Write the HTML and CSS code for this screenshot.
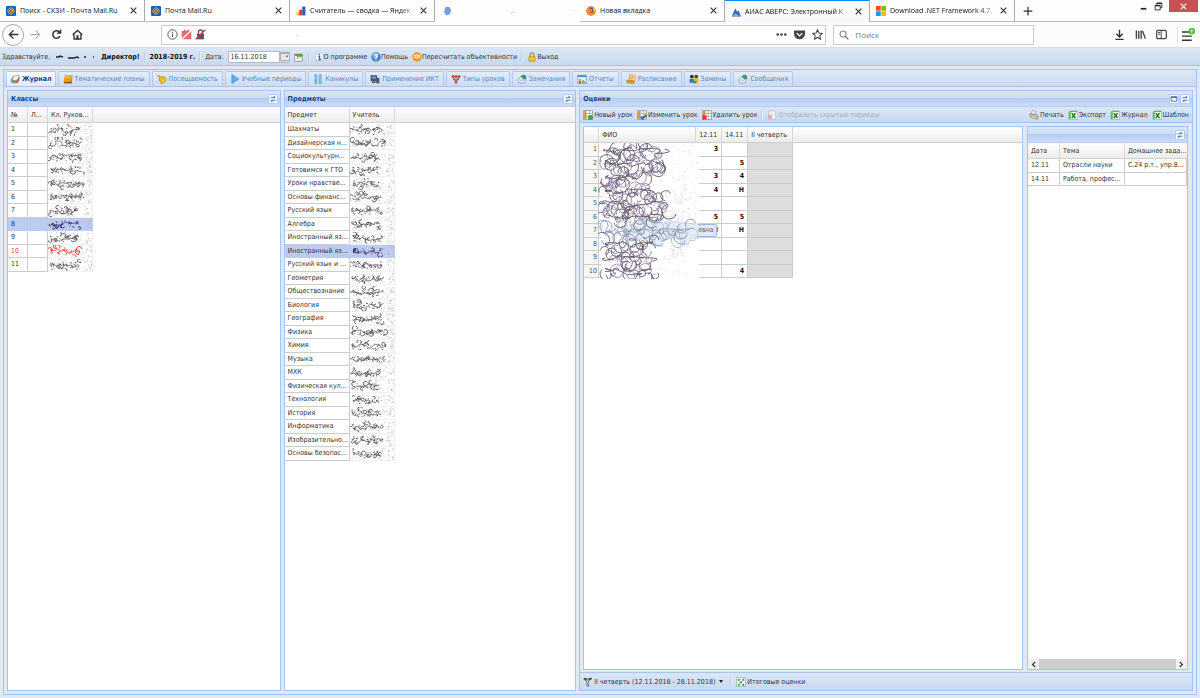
FILE: index.html
```html
<!DOCTYPE html>
<html lang="ru">
<head>
<meta charset="utf-8">
<title>АИАС АВЕРС: Электронный Классный Журнал</title>
<link rel="stylesheet" href="styles.css">
</head>
<body>
<svg class="sprite" aria-hidden="true">
  <symbol id="mail" viewBox="0 0 16 16"><rect width="16" height="16" rx="2" fill="#1560bd"/><circle cx="8" cy="8" r="2.4" fill="none" stroke="#f6b02c" stroke-width="1.6"/><path d="M10.4 5.6v3.2c0 2 2.6 1.600 2.600-.8a5 5 0 1 0-2 4" fill="none" stroke="#f6b02c" stroke-width="1.500"/></symbol>
  <symbol id="stats" viewBox="0 0 16 16"><rect x="1" y="10" width="4" height="5" fill="#f5c518"/><rect x="5" y="6" width="5" height="9" fill="#e23b2e"/><rect x="10" y="1" width="5" height="14" fill="#2f55c8"/></symbol>
  <symbol id="blob" viewBox="0 0 16 16"><path d="M5 1l6 1 2 5-2 6-6 2-3-5 1-6z" fill="#7c9be0"/></symbol>
  <symbol id="fox" viewBox="0 0 16 16"><circle cx="8" cy="8" r="7.500" fill="#f4682c"/><circle cx="8.500" cy="7" r="4" fill="#3c4fb5"/><path d="M1 6c1-3 3-4 3-4l2 3c3-1 5 1 4 3s-3 2-4 1c1 3 6 2 7-2l0-5c5 6 2 13-5 13S0 11 1 6z" fill="#fb8b1e"/><path d="M11 1c4 2 5 6 4 9l-3-2z" fill="#ffd02e"/></symbol>
  <symbol id="peak" viewBox="0 0 16 16"><path d="M1 15L7 2l3 6 2-3 4 10z" fill="#3b66b4"/><path d="M1 15l6-5 3 2 6 3z" fill="#7fa6dd"/></symbol>
  <symbol id="ms" viewBox="0 0 16 16"><path fill="#f25022" d="M0 0h7.500v7.500H0z"/><path fill="#7fba00" d="M8.500 0H16v7.500H8.500z"/><path fill="#00a4ef" d="M0 8.500h7.500V16H0z"/><path fill="#ffb900" d="M8.500 8.500H16V16H8.500z"/></symbol>
  <symbol id="x" viewBox="0 0 16 16"><path d="M3 3l10 10M13 3L3 13" stroke="currentColor" stroke-width="2" fill="none"/></symbol>
  <symbol id="plus" viewBox="0 0 16 16"><path d="M8 1v14M1 8h14" stroke="#333" stroke-width="2"/></symbol>
  <symbol id="back" viewBox="0 0 16 16"><path d="M15 8H2M8 2L2 8l6 6" fill="none" stroke="currentColor" stroke-width="2"/></symbol>
  <symbol id="fwd" viewBox="0 0 16 16"><path d="M1 8h13M8 2l6 6-6 6" fill="none" stroke="currentColor" stroke-width="1.500"/></symbol>
  <symbol id="reload" viewBox="0 0 16 16"><path d="M13 10.500A5.500 5.500 0 1 1 12 4" fill="none" stroke="#333" stroke-width="2.200"/><path d="M15 0v7H8z" fill="#333"/></symbol>
  <symbol id="home" viewBox="0 0 16 16"><path d="M1 8.500L8 2l7 6.500M3 8v6.500h10V8" fill="none" stroke="#333" stroke-width="2"/><path d="M6.500 9h3v6h-3z" fill="#333"/></symbol>
  <symbol id="info" viewBox="0 0 16 16"><circle cx="8" cy="8" r="6.800" fill="none" stroke="#555" stroke-width="1.400"/><path d="M8 4v1.800M8 7v5" stroke="#555" stroke-width="1.700"/></symbol>
  <symbol id="noflash" viewBox="0 0 16 16"><path d="M1 3h3V1h3v2h2V1h3v2h3v12H1z" fill="#e66a6a"/><path d="M1 15L15 2" stroke="#fff" stroke-width="1.800"/></symbol>
  <symbol id="nolock" viewBox="0 0 16 16"><path d="M3 7h10v8H3z" fill="#555"/><path d="M5 8V4.500a3 3 0 0 1 6 0V8" fill="none" stroke="#555" stroke-width="2"/><path d="M1 15L15 1" stroke="#e0304c" stroke-width="2"/></symbol>
  <symbol id="dots" viewBox="0 0 16 16"><circle cx="2.500" cy="8" r="1.900" fill="#444"/><circle cx="8" cy="8" r="1.900" fill="#444"/><circle cx="13.500" cy="8" r="1.900" fill="#444"/></symbol>
  <symbol id="pocket" viewBox="0 0 16 16"><path d="M0 2h16v5a8 8 0 0 1-16 0z" fill="#444"/><path d="M4 6l4 4 4-4" fill="none" stroke="#fff" stroke-width="2"/></symbol>
  <symbol id="star" viewBox="0 0 16 16"><path d="M8 1.200l2.100 4.600 4.900.6-3.600 3.400 1 5L8 12.300l-4.400 2.500 1-5L1 6.400l4.900-.6z" fill="none" stroke="#444" stroke-width="1.500"/></symbol>
  <symbol id="search" viewBox="0 0 16 16"><circle cx="6.500" cy="6.500" r="5" fill="none" stroke="#666" stroke-width="1.400"/><path d="M10 10l5 5" stroke="#666" stroke-width="1.700"/></symbol>
  <symbol id="down" viewBox="0 0 16 16"><path d="M8 1v10M3.500 7L8 11.500 12.500 7M2 15h12" fill="none" stroke="#333" stroke-width="2"/></symbol>
  <symbol id="library" viewBox="0 0 16 16"><path d="M2 2v12M5.500 3v11M9 2v12M11 3l4 11" fill="none" stroke="#444" stroke-width="2"/></symbol>
  <symbol id="sidebar" viewBox="0 0 16 16"><rect x="1" y="2" width="14" height="12" rx="2" fill="none" stroke="#444" stroke-width="1.800"/><path d="M7.500 2v12M3 5h3M3 7.500h3" stroke="#444" stroke-width="1.400"/></symbol>
  <symbol id="menu" viewBox="0 0 16 16"><path d="M0 5h9M0 10h12M0 15h12" stroke="#333" stroke-width="1.800"/><circle cx="12" cy="4" r="4" fill="#4cb82e"/><path d="M12 6.500v-4M10.200 4L12 2.200 13.800 4" fill="none" stroke="#fff"/></symbol>
  <symbol id="min" viewBox="0 0 16 16"><path d="M3 12h10" stroke="#222" stroke-width="3"/></symbol>
  <symbol id="restore" viewBox="0 0 16 16"><path d="M2 6h9v8H2zM5 5V2h9v8h-3" fill="none" stroke="#222" stroke-width="1.500"/><path d="M2 6.500h9M5 2.500h9" stroke="#222" stroke-width="2.500"/></symbol>
  <symbol id="calendar" viewBox="0 0 16 16"><path d="M1 2h14v13H1z" fill="#f4f4f4" stroke="#7d8ba0"/><path d="M1 2h14v3H1z" fill="#a3adbd"/><path d="M4 8h3M4 11h5" stroke="#b6bfce"/><path d="M9 7h4v3H9z" fill="#d0644b"/></symbol>
  <symbol id="calgo" viewBox="0 0 16 16"><path d="M1 4h12v11H1z" fill="#f4f4f4" stroke="#877770"/><path d="M1 3h12v3H1z" fill="#bf574c"/><path d="M6 12c0-4 1-5 4-5V9l5-4-5-4v2C5 3 4 8 6 12z" fill="#4bb333"/></symbol>
  <symbol id="about" viewBox="0 0 16 16"><path d="M8 1a6.500 6.500 0 1 1-2 12.500L4 16v-4A6.500 6.500 0 0 1 8 1z" fill="#f4f9ff" stroke="#9bbbe0"/><path d="M8.500 3v2M7 7h2v5M7 12h4" fill="none" stroke="#2361bd" stroke-width="2"/></symbol>
  <symbol id="help" viewBox="0 0 16 16"><circle cx="8" cy="8" r="7.500" fill="#397fc4"/><circle cx="7" cy="6" r="5" fill="#75b0e5"/><path d="M5.500 6C6 2.500 11 3.500 10 6.500L8 8.500v1.800M8 11.500v2" fill="none" stroke="#fff" stroke-width="2"/></symbol>
  <symbol id="recalc" viewBox="0 0 16 16"><circle cx="8" cy="8" r="7.500" fill="#f59428"/><path d="M3.500 5h9M8 4v8M3 9l2-4 2 4zM9 9l2-4 2 4z" fill="none" stroke="#fff0cf" stroke-width="1.300"/></symbol>
  <symbol id="lock" viewBox="0 0 16 16"><path d="M5 8V4.500a3 3 0 0 1 6 0V8" fill="none" stroke="#9d8d63" stroke-width="2"/><rect x="3" y="7" width="10" height="8.500" rx="1" fill="#f3c31d" stroke="#b98814"/></symbol>
  <symbol id="journal" viewBox="0 0 16 16"><path d="M5 3l8-2 3 4-3 8-4 2-7-2-1-4z" fill="#8e9296"/><path d="M6 4l6-2 2 3-3 5-7-1z" fill="#eceded"/><path d="M1 10l7 2-1 3-5-2z" fill="#6c9a62"/><path d="M11 9l4-3-1 6-4 3z" fill="#c5573f"/></symbol>
  <symbol id="book" viewBox="0 0 16 16"><path d="M3 2h12l-2 10H1z" fill="#e6a01e"/><path d="M1 12h12l2-10v4l-1 9H2z" fill="#9b5f10"/><path d="M3 5h10" stroke="#f9d67b"/></symbol>
  <symbol id="bell" viewBox="0 0 16 16"><path d="M2 2l4 3c4-2 8 0 8 3l1 2-7 6-2-3C3 11 3 8 4 6L1 3z" fill="#f5b91c" stroke="#a66e11"/><path d="M8 12l6-4" stroke="#fff1a0"/></symbol>
  <symbol id="play" viewBox="0 0 16 16"><path d="M3 1l11 7-11 7z" fill="#5bb1ef" stroke="#2f86ce"/></symbol>
  <symbol id="pause" viewBox="0 0 16 16"><path d="M3 1h3v14H3zM10 1h3v14h-3z" fill="#8fcaf4" stroke="#4493d3"/></symbol>
  <symbol id="pc" viewBox="0 0 16 16"><path d="M1 2h10v9H1z" fill="#324256"/><path d="M2.500 3.500h7v5h-7z" fill="#5a93d4"/><path d="M10 6h5v9h-5z" fill="#4d5967"/><path d="M3 12h6v2H3z" fill="#222"/></symbol>
  <symbol id="types" viewBox="0 0 16 16"><path d="M3 4h10M3 4l5 9 5-9M8 4v9" stroke="#555" stroke-width="1.300" fill="none"/><path d="M1 2h4v4H1zM6 2h4v4H6zM11 2h4v4h-4zM6 11h4v4H6zM3 7h3v3H3zM10 7h3v3h-3z" fill="#d14836"/></symbol>
  <symbol id="note" viewBox="0 0 16 16"><path d="M1 9l5-5 8 3-3 8-8-1z" fill="#e6eef8" stroke="#7187a7"/><path d="M6 4a4 4 0 0 1 8 3l-4 2z" fill="#4c9f52"/><path d="M10 1c4 0 6 4 4 8z" fill="#3c77bf"/><path d="M4 9l5 2" stroke="#7895bd"/></symbol>
  <symbol id="report" viewBox="0 0 16 16"><path d="M1 2h14v13H1z" fill="#eef5ff" stroke="#5281bd"/><path d="M1 2h14v3H1z" fill="#4a8fd9"/><path d="M3 8h4v6H3z" fill="#ee9731"/><path d="M7 14l3-5 4 5z" fill="#62a944"/><path d="M3 12h3v3H3z" fill="#cf4331"/></symbol>
  <symbol id="sched" viewBox="0 0 16 16"><path d="M6 1l9 2-1 8-9-1z" fill="#ffe28a" stroke="#c58a1c"/><path d="M1 10l9 1 4 2-3 2-9-1z" fill="#e39c25" stroke="#a8701a"/><path d="M7 5l5 1M7 7l4 1" stroke="#b07a20"/></symbol>
  <symbol id="people" viewBox="0 0 16 16"><circle cx="4.500" cy="4" r="3" fill="#30302c"/><circle cx="11.500" cy="4" r="3" fill="#5b3c1d"/><path d="M1 8h7v6H1z" fill="#2f77cf"/><path d="M8 7h7v7H8z" fill="#f1b42a"/><path d="M6 11h6v4H6z" fill="#4b9c3d"/></symbol>
  <symbol id="refresh" viewBox="0 0 16 16"><rect x=".7" y=".7" width="14.600" height="14.600" rx="2" fill="#f5f9ff" stroke="#a9c4e8" stroke-width="1.400"/><path d="M4 6h7M9 3.500L11.500 6M12 10H5M7 12.500L4.500 10" fill="none" stroke="#4a80bd" stroke-width="1.800"/></symbol>
  <symbol id="maxi" viewBox="0 0 16 16"><rect x=".7" y=".7" width="14.600" height="14.600" rx="2" fill="#f5f9ff" stroke="#a9c4e8" stroke-width="1.400"/><path d="M3.500 5h9v6.500h-9z" fill="none" stroke="#4468bd" stroke-width="1.400"/><path d="M3 5h10" stroke="#4468bd" stroke-width="2.500"/></symbol>
  <symbol id="tbl" viewBox="0 0 16 16"><path d="M1 1h14v14H1z" fill="#fff" stroke="#777"/><path d="M1 1h4v14H1z" fill="#eaa63c"/><path d="M1 5.500h14M1 10h14M5 1v14M10 1v14" stroke="#888"/></symbol>
  <symbol id="hide" viewBox="0 0 16 16"><path d="M3 1h8l3 3v11H3z" fill="#edf2f8" stroke="#a9b6c8"/><path d="M2 8l6 6M8 8l-6 6" stroke="#e19a9a" stroke-width="2"/></symbol>
  <symbol id="print" viewBox="0 0 16 16"><path d="M5 1l6 1-1 5-6-1z" fill="#fff" stroke="#888"/><path d="M1 6l9 1 5 3-2 5-10-3z" fill="#bdbdbd" stroke="#777"/><path d="M4 10l7 2-1 2-6-2z" fill="#f2d45e"/></symbol>
  <symbol id="xls" viewBox="0 0 16 16"><path d="M4 2h11v13H4z" fill="#f6fbf5" stroke="#7cb574"/><path d="M1 3l3-2h11v2H4v12H1z" fill="#72b167"/><path d="M6 5l6 8M12 5l-6 8" stroke="#187a20" stroke-width="2.500"/></symbol>
  <symbol id="filter" viewBox="0 0 16 16"><path d="M1 3l12-1-4 5v8l-3-1V8z" fill="#c3c3c3" stroke="#555"/><path d="M2 2l4 3M9 5l5-3" stroke="#333" stroke-width="2"/></symbol>
  <symbol id="total" viewBox="0 0 16 16"><path d="M1 1h14v14H1z" fill="#f4f9f4" stroke="#83a58f"/><path d="M3 3h3v3H3zM10 3h3v3h-3z" fill="#3f9d4b"/><path d="M6 7h4v3H6zM10 11h3v3h-3z" fill="#3a77c0"/><path d="M3 11h3v3H3z" fill="#3f9d4b"/></symbol>
</svg>

<header class="browser">
  <div class="btabs">
    <div class="btab"><svg class="ico"><use href="#mail"/></svg><span class="btitle">Поиск - СКЗИ - Почта Mail.Ru</span><button class="bclose" aria-label="Закрыть"><svg><use href="#x"/></svg></button></div>
    <div class="btab"><svg class="ico"><use href="#mail"/></svg><span class="btitle">Почта Mail.Ru</span><button class="bclose" aria-label="Закрыть"><svg><use href="#x"/></svg></button></div>
    <div class="btab"><svg class="ico"><use href="#stats"/></svg><span class="btitle fade">Считатель — сводка — Яндек</span><button class="bclose" aria-label="Закрыть"><svg><use href="#x"/></svg></button></div>
    <div class="btab erased"><svg class="ico"><use href="#blob"/></svg><span class="btitle">..</span><span>·</span></div>
    <div class="btab"><svg class="ico"><use href="#fox"/></svg><span class="btitle">Новая вкладка</span><button class="bclose" aria-label="Закрыть"><svg><use href="#x"/></svg></button></div>
    <div class="btab active"><svg class="ico"><use href="#peak"/></svg><span class="btitle fade">АИАС АВЕРС: Электронный К</span><button class="bclose" aria-label="Закрыть"><svg><use href="#x"/></svg></button></div>
    <div class="btab"><svg class="ico"><use href="#ms"/></svg><span class="btitle fade">Download .NET Framework 4.7.</span><button class="bclose" aria-label="Закрыть"><svg><use href="#x"/></svg></button></div>
    <button class="newtab" aria-label="Новая вкладка"><svg class="ico"><use href="#plus"/></svg></button>
    <div class="winctl">
      <button aria-label="Свернуть"><svg><use href="#min"/></svg></button>
      <button aria-label="Восстановить"><svg><use href="#restore"/></svg></button>
      <button class="winclose" aria-label="Закрыть окно"><svg><use href="#x"/></svg></button>
    </div>
  </div>
  <div class="bnav">
    <div class="navbtns">
      <button class="backbtn" aria-label="Назад"><svg class="ico"><use href="#back"/></svg></button>
      <button class="faded" aria-label="Вперёд"><svg class="ico"><use href="#fwd"/></svg></button>
      <button aria-label="Обновить"><svg class="ico"><use href="#reload"/></svg></button>
      <button aria-label="Домой"><svg class="ico"><use href="#home"/></svg></button>
    </div>
    <div class="field url">
      <svg class="ico"><use href="#info"/></svg><svg class="ico"><use href="#noflash"/></svg><svg class="ico"><use href="#nolock"/></svg>
      <input type="text" aria-label="Адрес" value="·">
      <button aria-label="Действия"><svg class="ico"><use href="#dots"/></svg></button>
      <button aria-label="Pocket"><svg class="ico"><use href="#pocket"/></svg></button>
      <button aria-label="В закладки"><svg class="ico"><use href="#star"/></svg></button>
    </div>
    <div class="field find">
      <svg class="ico"><use href="#search"/></svg>
      <input type="search" aria-label="Поиск" placeholder="Поиск">
    </div>
    <div class="navtools">
      <button aria-label="Загрузки"><svg class="ico"><use href="#down"/></svg></button>
      <button aria-label="Библиотека"><svg class="ico"><use href="#library"/></svg></button>
      <button aria-label="Боковая панель"><svg class="ico"><use href="#sidebar"/></svg></button>
      <button class="menubtn" aria-label="Меню"><svg><use href="#menu"/></svg></button>
    </div>
  </div>
</header>

<main class="app">
  <div class="userbar">
    <span>Здравствуйте,</span>
    <svg class="smudge" data-scribble="3"></svg>
    <strong>Директор!</strong>
    <i class="sep"></i>
    <strong>2018-2019 г.</strong>
    <i class="sep"></i>
    <label for="date">Дата:</label>
    <span class="datebox"><input id="date" type="text" value="16.11.2018"><button aria-label="Выбрать дату"><svg class="ico"><use href="#calendar"/></svg></button></span>
    <button class="tool" aria-label="Перейти к дате"><svg class="ico"><use href="#calgo"/></svg></button>
    <i class="sep"></i>
    <button class="tool"><svg class="ico"><use href="#about"/></svg>О программе</button>
    <button class="tool"><svg class="ico"><use href="#help"/></svg>Помощь</button>
    <button class="tool"><svg class="ico"><use href="#recalc"/></svg>Пересчитать объективности</button>
    <i class="sep"></i>
    <button class="tool"><svg class="ico"><use href="#lock"/></svg>Выход</button>
  </div>

  <div class="frame">
    <nav class="tabs">
      <button class="tab on"><svg class="ico"><use href="#journal"/></svg>Журнал</button>
      <button class="tab"><svg class="ico"><use href="#book"/></svg>Тематические планы</button>
      <button class="tab"><svg class="ico"><use href="#bell"/></svg>Посещаемость</button>
      <button class="tab"><svg class="ico"><use href="#play"/></svg>Учебные периоды</button>
      <button class="tab"><svg class="ico"><use href="#pause"/></svg>Каникулы</button>
      <button class="tab"><svg class="ico"><use href="#pc"/></svg>Применение ИКТ</button>
      <button class="tab"><svg class="ico"><use href="#types"/></svg>Типы уроков</button>
      <button class="tab"><svg class="ico"><use href="#note"/></svg>Замечания</button>
      <button class="tab"><svg class="ico"><use href="#report"/></svg>Отчеты</button>
      <button class="tab"><svg class="ico"><use href="#sched"/></svg>Расписание</button>
      <button class="tab"><svg class="ico"><use href="#people"/></svg>Замены</button>
      <button class="tab"><svg class="ico"><use href="#note"/></svg>Сообщения</button>
    </nav>

    <div class="columns">
      <section class="panel classes">
        <div class="phead"><h2>Классы</h2><button aria-label="Обновить"><svg class="ico"><use href="#refresh"/></svg></button></div>
        <div class="gridbox">
          <table class="grid">
            <colgroup><col class="w20"><col class="w20"><col class="w45"><col></colgroup>
            <thead><tr><th>№</th><th>Л...</th><th>Кл. Руков...</th><th></th></tr></thead>
            <tbody>
              <tr><td>1</td><td></td><td class="name"><svg data-scribble="11"></svg></td></tr>
              <tr><td>2</td><td></td><td class="name"><svg data-scribble="12"></svg></td></tr>
              <tr><td>3</td><td></td><td class="name"><svg data-scribble="13"></svg></td></tr>
              <tr><td>4</td><td></td><td class="name"><svg data-scribble="14"></svg></td></tr>
              <tr><td>5</td><td></td><td class="name"><svg data-scribble="15"></svg></td></tr>
              <tr><td>6</td><td></td><td class="name"><svg data-scribble="16"></svg></td></tr>
              <tr><td>7</td><td></td><td class="name"><svg data-scribble="17"></svg></td></tr>
              <tr class="sel"><td>8</td><td></td><td class="name"><svg data-scribble="18"></svg></td></tr>
              <tr><td>9</td><td></td><td class="name"><svg data-scribble="19"></svg></td></tr>
              <tr class="red"><td>10</td><td></td><td class="name"><svg data-scribble="20"></svg></td></tr>
              <tr><td>11</td><td></td><td class="name"><svg data-scribble="21"></svg></td></tr>
            </tbody>
          </table>
        </div>
      </section>

      <section class="panel subjects">
        <div class="phead"><h2>Предметы</h2><button aria-label="Обновить"><svg class="ico"><use href="#refresh"/></svg></button></div>
        <div class="gridbox">
          <table class="grid">
            <colgroup><col class="w65"><col class="w45"><col></colgroup>
            <thead><tr><th>Предмет</th><th>Учитель</th><th></th></tr></thead>
            <tbody>
              <tr><td>Шахматы</td><td class="name"><svg data-scribble="31"></svg></td></tr>
              <tr><td>Дизайнерская н...</td><td class="name"><svg data-scribble="32"></svg></td></tr>
              <tr><td>Социокультурн...</td><td class="name"><svg data-scribble="33"></svg></td></tr>
              <tr><td>Готовимся к ГТО</td><td class="name"><svg data-scribble="34"></svg></td></tr>
              <tr><td>Уроки нравстве...</td><td class="name"><svg data-scribble="35"></svg></td></tr>
              <tr><td>Основы финанс...</td><td class="name"><svg data-scribble="36"></svg></td></tr>
              <tr><td>Русский язык</td><td class="name"><svg data-scribble="37"></svg></td></tr>
              <tr><td>Алгебра</td><td class="name"><svg data-scribble="38"></svg></td></tr>
              <tr><td>Иностранный яз...</td><td class="name"><svg data-scribble="39"></svg></td></tr>
              <tr class="sel"><td>Иностранный яз...</td><td class="name"><svg data-scribble="40"></svg></td></tr>
              <tr><td>Русский язык и ...</td><td class="name"><svg data-scribble="41"></svg></td></tr>
              <tr><td>Геометрия</td><td class="name"><svg data-scribble="42"></svg></td></tr>
              <tr><td>Обществознание</td><td class="name"><svg data-scribble="43"></svg></td></tr>
              <tr><td>Биология</td><td class="name"><svg data-scribble="44"></svg></td></tr>
              <tr><td>География</td><td class="name"><svg data-scribble="45"></svg></td></tr>
              <tr><td>Физика</td><td class="name"><svg data-scribble="46"></svg></td></tr>
              <tr><td>Химия</td><td class="name"><svg data-scribble="47"></svg></td></tr>
              <tr><td>Музыка</td><td class="name"><svg data-scribble="48"></svg></td></tr>
              <tr><td>МХК</td><td class="name"><svg data-scribble="49"></svg></td></tr>
              <tr><td>Физическая кул...</td><td class="name"><svg data-scribble="50"></svg></td></tr>
              <tr><td>Технология</td><td class="name"><svg data-scribble="51"></svg></td></tr>
              <tr><td>История</td><td class="name"><svg data-scribble="52"></svg></td></tr>
              <tr><td>Информатика</td><td class="name"><svg data-scribble="53"></svg></td></tr>
              <tr><td>Изобразительно...</td><td class="name"><svg data-scribble="54"></svg></td></tr>
              <tr><td>Основы безопас...</td><td class="name"><svg data-scribble="55"></svg></td></tr>
            </tbody>
          </table>
        </div>
      </section>

      <section class="panel marks">
        <div class="phead"><h2>Оценки</h2><button aria-label="Развернуть"><svg class="ico"><use href="#maxi"/></svg></button><button aria-label="Обновить"><svg class="ico"><use href="#refresh"/></svg></button></div>
        <div class="ptools">
          <button class="tool"><svg class="ico" viewBox="0 0 16 16"><use href="#tbl"/><circle cx="12" cy="12" r="4" fill="#3fa535"/></svg>Новый урок</button>
          <button class="tool"><svg class="ico" viewBox="0 0 16 16"><use href="#tbl"/><path d="M6 11l3 3 6-6" fill="none" stroke="#2663c9" stroke-width="3"/></svg>Изменить урок</button>
          <button class="tool"><svg class="ico" viewBox="0 0 16 16"><use href="#tbl"/><path d="M1 9l6 6M7 9l-6 6" stroke="#e0301e" stroke-width="3"/></svg>Удалить урок</button>
          <i class="sep"></i>
          <button class="tool" disabled><svg class="ico"><use href="#hide"/></svg>Отобразить скрытые периоды</button>
          <button class="tool first-right"><svg class="ico"><use href="#print"/></svg>Печать</button>
          <button class="tool"><svg class="ico"><use href="#xls"/></svg>Экспорт</button>
          <button class="tool"><svg class="ico"><use href="#xls"/></svg>Журнал</button>
          <button class="tool"><svg class="ico"><use href="#xls"/></svg>Шаблон</button>
        </div>
        <div class="split">
          <div class="inner scores">
            <table class="grid">
              <colgroup><col class="w15"><col class="w97"><col class="w26"><col class="w26"><col class="w45"><col></colgroup>
              <thead><tr><th></th><th>ФИО</th><th>12.11</th><th>14.11</th><th>II четверть</th><th></th></tr></thead>
              <tbody>
                <tr><td class="num">1</td><td></td><td>3</td><td></td><td class="gray"></td></tr>
                <tr><td class="num">2</td><td></td><td></td><td>5</td><td class="gray"></td></tr>
                <tr><td class="num">3</td><td></td><td>3</td><td>4</td><td class="gray"></td></tr>
                <tr><td class="num">4</td><td></td><td>4</td><td>Н</td><td class="gray"></td></tr>
                <tr><td class="num">5</td><td></td><td></td><td></td><td class="gray"></td></tr>
                <tr><td class="num">6</td><td></td><td>5</td><td>5</td><td class="gray"></td></tr>
                <tr><td class="num">7</td><td></td><td>Н</td><td>Н</td><td class="gray"></td></tr>
                <tr><td class="num">8</td><td></td><td></td><td></td><td class="gray"></td></tr>
                <tr><td class="num">9</td><td></td><td></td><td></td><td class="gray"></td></tr>
                <tr><td class="num">10</td><td></td><td></td><td>4</td><td class="gray"></td></tr>
              </tbody>
            </table>
            <svg class="erasure" data-erasure="7"></svg>
            <div class="tip">евна</div>
          </div>
          <div class="inner lessons">
            <div class="phead"><h2></h2><button aria-label="Обновить"><svg class="ico"><use href="#refresh"/></svg></button></div>
            <table class="grid">
              <colgroup><col class="w32"><col class="w65"><col></colgroup>
              <thead><tr><th>Дата</th><th>Тема</th><th>Домашнее зада...</th></tr></thead>
              <tbody>
                <tr><td>12.11</td><td>Отрасли науки</td><td>С.24 р.т., упр.8...</td></tr>
                <tr><td>14.11</td><td>Работа, профес...</td><td></td></tr>
              </tbody>
            </table>
            <div class="scroll"><button aria-label="Влево"><svg viewBox="0 0 8 8"><path d="M6 1L3 4l3 3" fill="none" stroke="#333" stroke-width="1.500"/></svg></button><div class="thumb"></div><button aria-label="Вправо"><svg viewBox="0 0 8 8"><path d="M2 1l3 3-3 3" fill="none" stroke="#333" stroke-width="1.500"/></svg></button></div>
          </div>
        </div>
        <div class="pfoot">
          <button class="tool"><svg class="ico"><use href="#filter"/></svg>II четверть (12.11.2018 - 28.11.2018)<span class="caret"></span></button>
          <i class="sep"></i>
          <button class="tool"><svg class="ico"><use href="#total"/></svg>Итоговые оценки</button>
        </div>
      </section>
    </div>
  </div>
</main>
<script src="scribble.js"></script>
</body>
</html>
```

FILE: styles.css
```css
* { box-sizing: border-box; }

html, body { height: 100%; }

body {
  margin: 0;
  display: flex;
  flex-direction: column;
  font: 7px/12px "DejaVu Sans Condensed", "DejaVu Sans", sans-serif;
  color: #333;
  background: #dfe8f6;
}

button, input {
  font: inherit;
  color: inherit;
  border: 0;
  background: none;
  padding: 0;
  margin: 0;
  min-width: 0;
}

.sprite { position: absolute; width: 0; height: 0; }
.ico { width: 10px; height: 10px; flex: none; display: block; }

/* Browser chrome */
.browser { font-family: "Open Sans", "Noto Sans", sans-serif; font-size: 8px; background: #fff; }
.btabs { display: flex; height: 22px; border-bottom: 1px solid #bbb; background: #fdfdfd; font-size: 7px; }
.btab {
  flex: 0 1 145px;
  min-width: 0;
  display: flex;
  align-items: center;
  gap: 4px;
  padding: 0 6px;
  border-right: 1px solid #aaa;
}
.btitle { flex: 1; overflow: hidden; white-space: nowrap; color: #111; }
.fade { mask-image: linear-gradient(to right, #000 85%, rgba(0, 0, 0, 0.2)); }
.btab.active { border-top: 1px solid #0a84ff; background: #f9f9fa; height: 22px; }
.btab.erased { border: 0; background: #fefefe; height: 22px; padding-left: 8px; color: #888; }
.btab.erased .btitle { text-align: center; color: #888; }
.bclose svg, .winctl svg { width: 9px; height: 9px; display: block; }
.newtab { padding: 0 8px; }
.winctl { margin-left: auto; display: flex; align-items: flex-start; padding-right: 2px; gap: 6px; }
.winctl button { height: 12px; display: flex; align-items: center; justify-content: center; }
.winctl .winclose { width: 29px; background: #c75050; color: #fff; }

.bnav {
  display: flex;
  align-items: center;
  height: 26px;
  padding: 0 5px 0 2px;
  background: #fcfcfc;
  border-bottom: 1px solid #ddd;
}
.navbtns { display: flex; align-items: center; gap: 10px; flex: 0 0 159px; }
.navbtns .ico { width: 11px; height: 11px; }
.backbtn {
  width: 22px;
  height: 22px;
  border: 1px solid #aaa;
  border-radius: 50%;
  display: grid;
  place-items: center;
}
.backbtn + button { margin-left: -4px; }
.faded { color: #aaa; }
.field {
  display: flex;
  align-items: center;
  gap: 3px;
  height: 20px;
  padding: 0 5px;
  border: 1px solid #ccc;
  background: #fff;
}
.field input { flex: 1; height: 16px; outline: 0; }
.url { flex: 675; padding-right: 2px; }
.url input { padding-left: 87px; color: #888; }
.url button { margin-left: 4px; }
.url .ico { width: 11px; height: 11px; }
.find { flex: 194; margin-left: 7px; gap: 6px; }
.navtools { display: flex; align-items: center; gap: 10px; padding-left: 80px; }
.navtools .ico { width: 11px; height: 11px; }
.menubtn { border-left: 1px solid #ddd; padding-left: 4px; }
.menubtn svg { width: 13px; height: 15px; display: block; }

/* Application */
.app { flex: 1; min-height: 0; display: flex; flex-direction: column; padding: 0 3px 3px; }
.userbar {
  display: flex;
  align-items: center;
  gap: 4px;
  height: 18px;
  margin: 0 -3px 3px;
  padding: 0 2px;
  background: linear-gradient(#dbe7f6, #c8d9ef);
  border-bottom: 1px solid #a9c4ea;
}
.userbar, .ptools, .pfoot { white-space: nowrap; }
.userbar strong { color: #111; }
.smudge { width: 43px; height: 6px; }
.sep { width: 2px; height: 10px; background: #b4cff0; border-right: 1px solid #e8f1fc; flex: none; }
.datebox { display: flex; height: 12px; }
.datebox input { width: 52px; border: 1px solid #b5b8c8; background: #fff; padding: 0 2px; }
.datebox button { border-bottom: 1px solid #b5b8c8; }
.tool { display: flex; align-items: center; gap: 1px; white-space: nowrap; }
.tool:disabled { color: #a5adba; }
.userbar .tool { gap: 0; }

.frame { flex: 1; min-height: 0; display: flex; flex-direction: column; border: 1px solid #a9c4ea; }
.tabs {
  display: flex;
  align-items: flex-end;
  gap: 2px;
  height: 17px;
  padding: 0 2px;
  background: linear-gradient(#dde8f7, #c9daf0);
  border-bottom: 1px solid #a9c4ea;
}
.tab {
  display: flex;
  align-items: center;
  gap: 2px;
  height: 15px;
  padding: 0 4px;
  border: 1px solid #b0caee;
  border-bottom: 0;
  border-radius: 2px 2px 0 0;
  background: linear-gradient(#e2edfb, #cbdcf3);
  color: #5c83b5;
  white-space: nowrap;
}
.tab.on { padding: 0 3px; font-weight: bold; color: #15428b; background: linear-gradient(#fff, #dfe8f6); }

.columns { flex: 1; min-height: 0; display: flex; gap: 3px; padding: 3px; }
.panel { display: flex; flex-direction: column; min-width: 0; border: 1px solid #a9c4ea; }
.classes { flex: 273 0 0; }
.subjects { flex: 292 0 0; }
.marks { flex: 615 0 0; }
.phead {
  display: flex;
  align-items: center;
  gap: 1px;
  height: 16px;
  padding: 0 2px 0 3px;
  background: linear-gradient(#dbe7f7, #cbdcf4 45%, #b5cdf1 50%, #cbdcf5);
  border-bottom: 1px solid #b4cdf0;
}
.phead h2 { flex: 1; margin: 0; font-size: 7px; color: #15428b; }
.gridbox { flex: 1; background: #fff; }

.grid { width: 100%; table-layout: fixed; border-collapse: separate; border-spacing: 0; }
.w15 { width: 15px; }
.w20 { width: 20px; }
.w26 { width: 26px; }
.w32 { width: 32px; }
.w45 { width: 45px; }
.w65 { width: 65px; }
.w97 { width: 97px; }
.grid th, .grid td { padding: 0 3px; text-align: left; white-space: nowrap; overflow: hidden; }
.grid th {
  height: 16px;
  font-weight: normal;
  background: linear-gradient(#fff, #ececec);
  border-right: 1px solid #d8d8d8;
  border-bottom: 1px solid #d0d0d0;
}
.grid th:last-child { border-right: 0; }
.grid td { height: 14px; line-height: 11px; border-right: 1px solid #ccc; border-bottom: 1px solid #ccc; }
.grid tr:nth-child(even) td { height: 13px; }
.grid .name { padding: 0; border-color: #f0f0f0; color: #55535c; }
.name svg { display: block; width: 100%; height: 12px; }
.grid .sel td { background: #bccbf0; border-color: #bccbf0; }
.grid .sel .name { color: #2c2363; }
.grid .red td { color: #f33; }

.ptools {
  display: flex;
  align-items: center;
  gap: 4px;
  height: 16px;
  padding: 0 3px;
  background: linear-gradient(#dbe7f6, #c8d9ef);
  border-bottom: 1px solid #a9c4ea;
}
.first-right { margin-left: auto; }
.split { flex: 1; min-height: 0; display: flex; gap: 4px; padding: 3px 4px 2px 3px; }
.inner { background: #fff; border: 1px solid #a9c4ea; min-width: 0; }
.scores { flex: 443 0 0; position: relative; }
.scores .grid td { font-weight: bold; color: #111; text-align: right; }
.scores .grid .num { font-weight: normal; color: #555; background: #f7f7f7; padding: 0 1px; }
.scores .grid .gray { background: #ddd; border-color: #ccc; }
.tip {
  position: absolute;
  left: 114px;
  top: 97px;
  height: 13px;
  padding: 0 2px 0 0;
  line-height: 11px;
  color: #667;
  background: #dce8f6;
  border: 1px solid #9fb8d8;
  border-left: 0;
  border-radius: 0 2px 2px 0;
}
.erasure { position: absolute; left: 14px; top: 16px; width: 101px; height: 136px; }
.lessons { flex: 161 0 0; display: flex; flex-direction: column; }
.scroll { margin-top: auto; display: flex; height: 10px; background: #f0f0f0; }
.scroll button { width: 11px; }
.scroll button svg { width: 7px; height: 7px; display: block; margin: 0 auto; }
.thumb { flex: 1; background: #cdcdcd; }
.pfoot {
  display: flex;
  align-items: center;
  gap: 4px;
  height: 18px;
  padding: 0 3px;
  background: linear-gradient(#dbe7f6, #c8d9ef);
  border-top: 1px solid #a9c4ea;
}
.caret { border: 2px solid transparent; border-top: 3px solid #222; border-bottom: 0; margin: 0 3px; }
```

FILE: scribble.js
```javascript
// Draws the pen strokes that cover personal names.
function random(seed) {
  let s = seed * 7919 + 17;
  return (a, b) => {
    s = (s * 16807) % 2147483647;
    return a + (b - a) * (s / 2147483647);
  };
}

const path = (d, stroke, width, fill) =>
  `<path d="${d}" fill="${fill || 'none'}" stroke="${stroke}" stroke-width="${width}"/>`;

function strokes(rnd, x0, x1, y, amp, step) {
  let d = `M${x0} ${y}`;
  for (let x = x0; x < x1; x += rnd(step / 2, step)) {
    d += `Q${(x + rnd(-step, step)).toFixed(1)} ${(y + rnd(-amp, amp)).toFixed(1)} ${x.toFixed(1)} ${(y + rnd(-amp, amp)).toFixed(1)}`;
  }
  return d;
}

// Separate curls turned at random, scattered along a line.
function curls(rnd, x0, x1, y, size) {
  let d = '';
  for (let x = x0; x < x1; x += rnd(2, 8)) {
    const cy = y + rnd(-4, 4);
    let a = rnd(0, 6.3);
    const turn = rnd(-1, 1) > 0 ? 1.4 : -1.4;
    const r = rnd(size / 3, size);
    d += `M${x.toFixed(1)} ${cy.toFixed(1)}q`;
    const parts = [];
    for (let i = 0; i < 3; i++) {
      const cx = Math.cos(a) * r * 0.6;
      const cyy = Math.sin(a) * r * 0.6;
      a += turn;
      parts.push(`${cx.toFixed(1)} ${cyy.toFixed(1)} ${(cx + Math.cos(a) * r * 0.5).toFixed(1)} ${(cyy + Math.sin(a) * r * 0.5).toFixed(1)}`);
    }
    d += parts.join(' ');
  }
  return d;
}

function specks(rnd, x0, x1, y0, y1, count) {
  let d = '';
  for (let i = 0; i < count; i++) {
    d += `M${rnd(x0, x1).toFixed(1)} ${rnd(y0, y1).toFixed(1)}l${rnd(-2, 2).toFixed(1)} ${rnd(-1, 1).toFixed(1)}`;
  }
  return d;
}

document.querySelectorAll('[data-scribble]').forEach(svg => {
  const rnd = random(+svg.dataset.scribble);
  if (svg.classList.contains('smudge')) {
    svg.innerHTML = path('M2 3h3l1-1 3 1M14 4h6l3-1 2 1M30 3h2M39 3h1', '#223', 1.5);
    return;
  }
  const end = rnd(30, 36);
  svg.innerHTML =
    path(specks(rnd, 1, 45, 0, 12, 45), '#c4c4c8', 0.7) +
    path(specks(rnd, 38, 45, 0, 12, 12), '#b4b4b8', 0.8) +
    path(specks(rnd, 3, end, 3, 10, 20), 'currentColor', 1) +
    path(curls(rnd, 3, end, 6, 4), 'currentColor', 0.9) +
    path(strokes(rnd, 3, end, 6.5, 3, 5), 'currentColor', 0.7) +
    path(specks(rnd, 3, end, 3, 10, 5), '#b98a5a', 0.8);
});

document.querySelectorAll('[data-erasure]').forEach(svg => {
  const rnd = random(+svg.dataset.erasure);
  let out = '<path d="M3 0H101v136H4l-2-9 2-12-2-14 2-13-2-16 2-18-1-20 1-19z" fill="#fff"/>';
  out += path('M22 84l14-3 12-4 14 3 10-2 12 2 17 1v14l-8 0-3 7-8-1 2-6-10 0-8 2-4 6-6-1 1-8-12 1-10 3-8-6z', '#b9cce2', 0.8, '#e4edf7');
  out += path(specks(rnd, 4, 99, 2, 134, 330), '#ccc', 0.7);
  out += path(curls(rnd, 62, 92, 78, 10) + curls(rnd, 70, 94, 58, 9) + curls(rnd, 66, 92, 112, 9), '#ddd', 0.7);
  for (let i = 0; i < 10; i++) {
    const y = 7 + i * 13.5;
    const end = [68, 72, 48, 60, 76, 64, 98, 58, 58, 60][i];
    const pale = i === 6;
    out += path(curls(rnd, 8, end - 4, y, 12), pale ? '#8297b3' : '#625e68', 0.9);
    out += path(curls(rnd, 12, end - 8, y + 1, 11), pale ? '#a3b4cb' : '#8d72aa', 0.8);
    out += path(strokes(rnd, 7, end, y, 4, 14), pale ? '#90a2bb' : '#605c68', 0.9);
    out += path(specks(rnd, 24, end - 4, y - 4, y + 4, 14), '#777', 0.8);
  }
  svg.innerHTML = out;
});
```
